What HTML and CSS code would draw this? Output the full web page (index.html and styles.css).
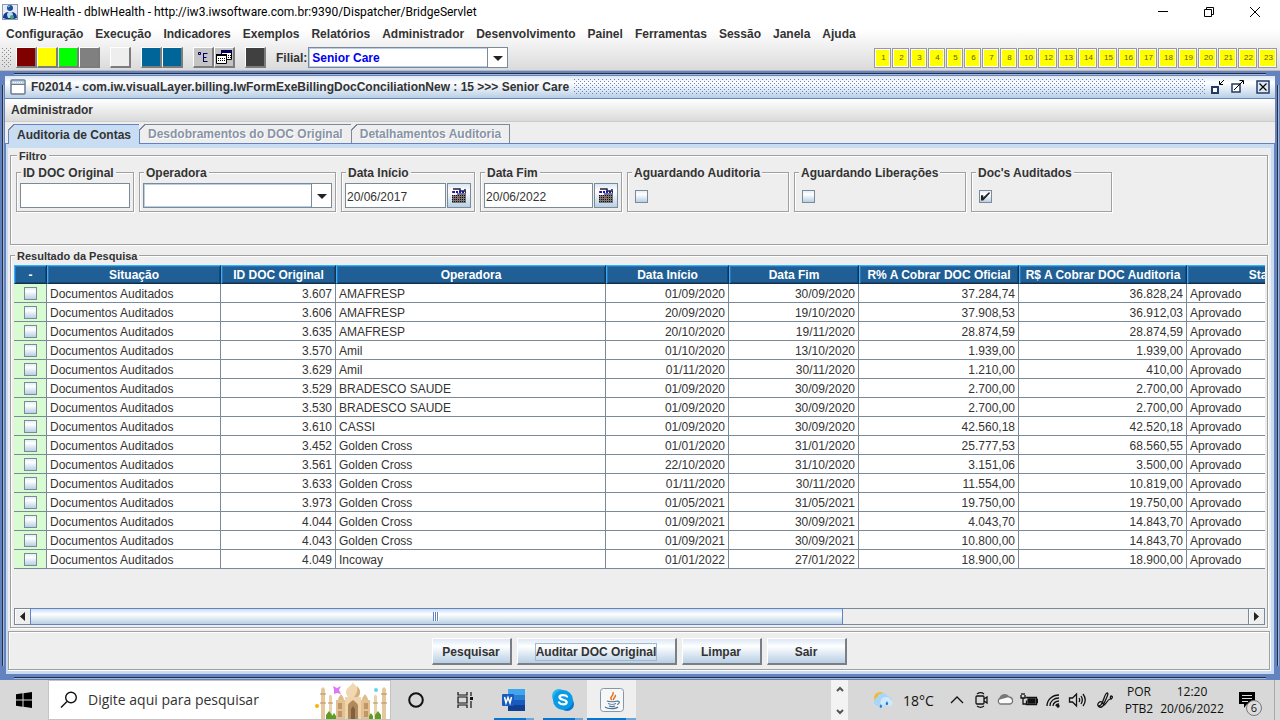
FILE: index.html
```html
<!DOCTYPE html>
<html lang="pt-BR">
<head>
	<meta charset="utf-8">
	<meta name="viewport" content="width=device-width, initial-scale=1">
	<title>IW-Health</title>
	<link rel="stylesheet" href="styles.css">
</head>
<body>
	<header class="titlebar">
		<svg class="app-icon" width="16" height="16" viewBox="0 0 16 16"><rect x=".5" y=".5" width="15" height="15" fill="#e8edf5" stroke="#8a9bb5"/><circle cx="8" cy="4" r="3" fill="#1d4f9c"/><path d="M1 14c0-4 2-5 4-6l3 1 3-1c2 1 4 2 4 6l-3 1H4z" fill="#123f8c"/><path d="M5 11a3 3 0 0 1 6 0v3H6z" fill="#b8d8f8"/><circle cx="10" cy="13" r="2" fill="#4aa36a"/><path d="M6 3l2-1" stroke="#9cc4f5"/></svg>
		<span class="title-text">IW-Health - dbIwHealth - http://iw3.iwsoftware.com.br:9390/Dispatcher/BridgeServlet</span>
		<div class="win-buttons">
			<button aria-label="Minimizar"><svg width="12" height="12" viewBox="0 0 12 12"><path d="M1 5.500h10" stroke="#000"/></svg></button>
			<button aria-label="Restaurar"><svg width="12" height="12" viewBox="0 0 12 12" fill="none" stroke="#000"><path d="M1.500 3.500h7v7h-7zM3.500 3.500v-2h7v7h-2"/></svg></button>
			<button aria-label="Fechar"><svg width="12" height="12" viewBox="0 0 12 12"><path d="M1 1l10 10M11 1L1 11" stroke="#000"/></svg></button>
		</div>
	</header>

	<div class="app-bars">
		<nav class="menubar">
			<a href="#">Configuração</a>
			<a href="#">Execução</a>
			<a href="#">Indicadores</a>
			<a href="#">Exemplos</a>
			<a href="#">Relatórios</a>
			<a href="#">Administrador</a>
			<a href="#">Desenvolvimento</a>
			<a href="#">Painel</a>
			<a href="#">Ferramentas</a>
			<a href="#">Sessão</a>
			<a href="#">Janela</a>
			<a href="#">Ajuda</a>
		</nav>
		<div class="toolbar">
			<span class="grip"></span>
			<div class="tool-group">
				<button class="tool maroon" aria-label="Vermelho"></button>
				<button class="tool yellow" aria-label="Amarelo"></button>
				<button class="tool green" aria-label="Verde"></button>
				<button class="tool gray" aria-label="Cinza"></button>
			</div>
			<div class="tool-group">
				<button class="tool" aria-label="Limpar cor"></button>
			</div>
			<div class="tool-group">
				<button class="tool blue" aria-label="Azul 1"></button>
				<button class="tool blue" aria-label="Azul 2"></button>
			</div>
			<div class="tool-group">
				<button class="tool silver" aria-label="Árvore"><svg width="16" height="16" viewBox="0 0 16 16" fill="none" stroke="#000060"><path d="M3.500 3.500h2v2h-2zM8.500 4v9M8.500 4.500h4M8.500 8.500h3M8.500 12.500h4"/></svg></button>
				<button class="tool silver" aria-label="Janelas"><svg width="18" height="18" viewBox="0 0 18 18"><path d="M6.500 2.500h10v9h-10z" fill="#fff" stroke="#000"/><path d="M6 2h11v3H6z" fill="#000060"/><path d="M1.500 6.500h10v9h-10z" fill="#fff" stroke="#000"/><path d="M1 6h11v2H1z" fill="#000"/><path d="M3 10.500h8M3 12.500h8M13 7.500h3M13 9.500h3" stroke="#000" stroke-dasharray="1 1"/></svg></button>
			</div>
			<div class="tool-group">
				<button class="tool dark" aria-label="Escuro"></button>
			</div>
			<label class="filial-label" for="filial">Filial:</label>
			<span class="combo filial">
				<select id="filial"><option>Senior Care</option></select>
			</span>
			<div class="slots">
				<button>1</button><button>2</button><button>3</button><button>4</button><button>5</button><button>6</button><button>7</button><button>8</button><button class="wide">10</button><button class="wide">12</button><button class="wide">13</button><button class="wide">14</button><button class="wide">15</button><button class="wide">16</button><button class="wide">17</button><button class="wide">18</button><button class="wide">19</button><button class="wide">20</button><button class="wide">21</button><button class="wide">22</button><button class="wide">23</button>
			</div>
		</div>
	</div>

	<main class="frame">
		<div class="frame-title">
			<svg width="16" height="16" viewBox="0 0 16 16"><rect x="1" y="1" width="14" height="14" rx="1" fill="#fff" stroke="#6b7b8d" stroke-width="1.500"/><path d="M2 2h12v3H2z" fill="#b8cfe5"/><path d="M3 3.500h10" stroke="#fff" stroke-dasharray="1 1"/><path d="M1 5.500h14" stroke="#6b7b8d"/></svg>
			<h1>F02014 - com.iw.visualLayer.billing.IwFormExeBillingDocConciliationNew : 15 &gt;&gt;&gt; Senior Care</h1>
			<span class="bumps"></span>
			<div class="frame-buttons">
				<button aria-label="Minimizar janela"><svg width="16" height="16" viewBox="0 0 16 16" fill="none"><path d="M2 8h6v6H2z" fill="#fff" stroke="#223a66" stroke-width="2"/><path d="M14 1l-4 4M9.500 2v3.500H13" stroke="#000"/></svg></button>
				<button aria-label="Maximizar janela"><svg width="16" height="16" viewBox="0 0 16 16" fill="none"><path d="M2 5h8v8H2z" fill="#fff" stroke="#223a66" stroke-width="1.500"/><path d="M4 11l9-9M9.500 1.500h4V5" stroke="#000"/></svg></button>
				<button class="close" aria-label="Fechar janela"><svg width="14" height="14" viewBox="0 0 14 14" fill="none"><path d="M1 1h12v12H1z" fill="#dce8f5" stroke="#223a66" stroke-width="1.500"/><path d="M3.500 3.500l7 7M10.500 3.500l-7 7" stroke="#000" stroke-width="1.200"/></svg></button>
			</div>
		</div>
		<nav class="frame-menu"><a href="#">Administrador</a></nav>
		<div class="tabs" role="tablist">
			<button class="tab active" role="tab" aria-selected="true">Auditoria de Contas</button>
			<button class="tab" role="tab" disabled>Desdobramentos do DOC Original</button>
			<button class="tab" role="tab" disabled>Detalhamentos Auditoria</button>
		</div>

		<div class="tab-outer">
		<div class="tab-pane">
			<fieldset class="panel filters">
				<legend>Filtro</legend>
				<div class="filter-row">
					<fieldset class="box">
						<legend><label for="id-doc">ID DOC Original</label></legend>
						<input class="field" id="id-doc" type="text">
					</fieldset>
					<fieldset class="box operadora-box">
						<legend><label for="operadora">Operadora</label></legend>
						<span class="combo">
							<select id="operadora"><option></option></select>
						</span>
					</fieldset>
					<fieldset class="box date-box">
						<legend><label for="data-inicio">Data Início</label></legend>
						<input class="field" id="data-inicio" type="text" value="20/06/2017">
						<button class="calendar" aria-label="Calendário início"><svg width="14" height="15" viewBox="0 0 14 15"><path d="M1 1h7v2h5V1" fill="none" stroke="#222" stroke-width="1.500"/><path d="M1 4h13" stroke="#1010e0" stroke-width="2" stroke-dasharray="2 1"/><path d="M5 5h9v10H0V7h5z" fill="#777"/><path d="M0 7.500h13M0 9.500h13M0 11.500h13M0 13.500h13" stroke="#111" stroke-dasharray="1 1"/><path d="M0 3h1v2H0zM6 9h2v1H6zM3 11h1v1H3z" fill="#e02020"/></svg></button>
					</fieldset>
					<fieldset class="box date-box fim-box">
						<legend><label for="data-fim">Data Fim</label></legend>
						<input class="field" id="data-fim" type="text" value="20/06/2022">
						<button class="calendar" aria-label="Calendário fim"><svg width="14" height="15" viewBox="0 0 14 15"><path d="M1 1h7v2h5V1" fill="none" stroke="#222" stroke-width="1.500"/><path d="M1 4h13" stroke="#1010e0" stroke-width="2" stroke-dasharray="2 1"/><path d="M5 5h9v10H0V7h5z" fill="#777"/><path d="M0 7.500h13M0 9.500h13M0 11.500h13M0 13.500h13" stroke="#111" stroke-dasharray="1 1"/><path d="M0 3h1v2H0zM6 9h2v1H6zM3 11h1v1H3z" fill="#e02020"/></svg></button>
					</fieldset>
					<fieldset class="box check-box auditoria-box">
						<legend><label for="ag-auditoria">Aguardando Auditoria</label></legend>
						<input class="check" id="ag-auditoria" type="checkbox">
					</fieldset>
					<fieldset class="box check-box liberacoes-box">
						<legend><label for="ag-liberacoes">Aguardando Liberações</label></legend>
						<input class="check" id="ag-liberacoes" type="checkbox">
					</fieldset>
					<fieldset class="box check-box docs-box">
						<legend><label for="docs">Doc's Auditados</label></legend>
						<input class="check" id="docs" type="checkbox" checked>
					</fieldset>
				</div>
			</fieldset>

			<fieldset class="panel results">
				<legend>Resultado da Pesquisa</legend>
				<div class="table-wrap">
					<table>
						<colgroup>
							<col class="c-check"><col class="c-sit"><col class="c-id"><col class="c-op"><col class="c-ini"><col class="c-fim"><col class="c-ofi"><col class="c-aud"><col class="c-status">
						</colgroup>
						<thead>
							<tr><th>-</th><th>Situação</th><th>ID DOC Original</th><th>Operadora</th><th>Data Início</th><th>Data Fim</th><th>R% A Cobrar DOC Oficial</th><th>R$ A Cobrar DOC Auditoria</th><th>Status</th></tr>
						</thead>
						<tbody>
							<tr><td><input class="check" type="checkbox" aria-label="3.607"></td><td>Documentos Auditados</td><td>3.607</td><td>AMAFRESP</td><td>01/09/2020</td><td>30/09/2020</td><td>37.284,74</td><td>36.828,24</td><td>Aprovado</td></tr>
							<tr><td><input class="check" type="checkbox" aria-label="3.606"></td><td>Documentos Auditados</td><td>3.606</td><td>AMAFRESP</td><td>20/09/2020</td><td>19/10/2020</td><td>37.908,53</td><td>36.912,03</td><td>Aprovado</td></tr>
							<tr><td><input class="check" type="checkbox" aria-label="3.635"></td><td>Documentos Auditados</td><td>3.635</td><td>AMAFRESP</td><td>20/10/2020</td><td>19/11/2020</td><td>28.874,59</td><td>28.874,59</td><td>Aprovado</td></tr>
							<tr><td><input class="check" type="checkbox" aria-label="3.570"></td><td>Documentos Auditados</td><td>3.570</td><td>Amil</td><td>01/10/2020</td><td>13/10/2020</td><td>1.939,00</td><td>1.939,00</td><td>Aprovado</td></tr>
							<tr><td><input class="check" type="checkbox" aria-label="3.629"></td><td>Documentos Auditados</td><td>3.629</td><td>Amil</td><td>01/11/2020</td><td>30/11/2020</td><td>1.210,00</td><td>410,00</td><td>Aprovado</td></tr>
							<tr><td><input class="check" type="checkbox" aria-label="3.529"></td><td>Documentos Auditados</td><td>3.529</td><td>BRADESCO SAUDE</td><td>01/09/2020</td><td>30/09/2020</td><td>2.700,00</td><td>2.700,00</td><td>Aprovado</td></tr>
							<tr><td><input class="check" type="checkbox" aria-label="3.530"></td><td>Documentos Auditados</td><td>3.530</td><td>BRADESCO SAUDE</td><td>01/09/2020</td><td>30/09/2020</td><td>2.700,00</td><td>2.700,00</td><td>Aprovado</td></tr>
							<tr><td><input class="check" type="checkbox" aria-label="3.610"></td><td>Documentos Auditados</td><td>3.610</td><td>CASSI</td><td>01/09/2020</td><td>30/09/2020</td><td>42.560,18</td><td>42.520,18</td><td>Aprovado</td></tr>
							<tr><td><input class="check" type="checkbox" aria-label="3.452"></td><td>Documentos Auditados</td><td>3.452</td><td>Golden Cross</td><td>01/01/2020</td><td>31/01/2020</td><td>25.777,53</td><td>68.560,55</td><td>Aprovado</td></tr>
							<tr><td><input class="check" type="checkbox" aria-label="3.561"></td><td>Documentos Auditados</td><td>3.561</td><td>Golden Cross</td><td>22/10/2020</td><td>31/10/2020</td><td>3.151,06</td><td>3.500,00</td><td>Aprovado</td></tr>
							<tr><td><input class="check" type="checkbox" aria-label="3.633"></td><td>Documentos Auditados</td><td>3.633</td><td>Golden Cross</td><td>01/11/2020</td><td>30/11/2020</td><td>11.554,00</td><td>10.819,00</td><td>Aprovado</td></tr>
							<tr><td><input class="check" type="checkbox" aria-label="3.973"></td><td>Documentos Auditados</td><td>3.973</td><td>Golden Cross</td><td>01/05/2021</td><td>31/05/2021</td><td>19.750,00</td><td>19.750,00</td><td>Aprovado</td></tr>
							<tr><td><input class="check" type="checkbox" aria-label="4.044"></td><td>Documentos Auditados</td><td>4.044</td><td>Golden Cross</td><td>01/09/2021</td><td>30/09/2021</td><td>4.043,70</td><td>14.843,70</td><td>Aprovado</td></tr>
							<tr><td><input class="check" type="checkbox" aria-label="4.043"></td><td>Documentos Auditados</td><td>4.043</td><td>Golden Cross</td><td>01/09/2021</td><td>30/09/2021</td><td>10.800,00</td><td>14.843,70</td><td>Aprovado</td></tr>
							<tr><td><input class="check" type="checkbox" aria-label="4.049"></td><td>Documentos Auditados</td><td>4.049</td><td>Incoway</td><td>01/01/2022</td><td>27/01/2022</td><td>18.900,00</td><td>18.900,00</td><td>Aprovado</td></tr>
						</tbody>
					</table>
				</div>
				<div class="scrollbar">
					<button aria-label="Rolar à esquerda"><svg width="5" height="9" viewBox="0 0 5 9"><path d="M5 0v9L0 4.500z" fill="#222"/></svg></button>
					<div class="track"><div class="thumb"></div></div>
					<button aria-label="Rolar à direita"><svg width="5" height="9" viewBox="0 0 5 9"><path d="M0 0v9l5-4.500z" fill="#222"/></svg></button>
				</div>
			</fieldset>

			<div class="actions">
				<button>Pesquisar</button>
				<button class="focused"><span>Auditar DOC Original</span></button>
				<button>Limpar</button>
				<button>Sair</button>
			</div>
		</div>
		</div>
	</main>

	<footer class="taskbar">
		<button class="start" aria-label="Iniciar"><svg width="16" height="16" viewBox="0 0 16 16"><path d="M0 2.200L6.500 1.300v6.200H0zM7.500 1.200L16 0v7.500H7.500zM0 8.500h6.500v6.200L0 13.800zM7.500 8.500H16V16l-8.500-1.200z"/></svg></button>
		<div class="search">
			<svg width="18" height="18" viewBox="0 0 18 18" fill="none" stroke="#111" stroke-width="1.400"><circle cx="11" cy="6.500" r="5.300"/><path d="M7 10.500L1 16.500"/></svg>
			<input type="text" aria-label="Pesquisar" placeholder="Digite aqui para pesquisar">
			<svg class="palace" width="76" height="38" viewBox="0 0 76 38">
				<circle cx="3" cy="25" r="2" fill="#ffb000"/><circle cx="62" cy="9" r="2" fill="#62d5ec"/>
				<path d="M19 5l4 2 4-2-2 4 2 4-4-1-3 1v-4z" fill="#dc7af5"/>
				<path d="M7 38V8l2-2 2 2v30zM68 38V8l2-2 2 2v30z" fill="#e4c79b"/>
				<path d="M15 38V15l1.500-1.500L18 15v23zM60 38V15l1.500-1.500L63 15v23z" fill="#e9d1a8"/>
				<path d="M6 13h6M6 22h6M67 13h6M67 22h6M14 22h5M59 22h5" stroke="#b58f62"/>
				<path d="M39 1c1 4 7 5 7 10 0 2-1 4-2 5H34c-1-1-2-3-2-5 0-5 6-6 7-10z" fill="#f0d9b2"/>
				<path d="M43 5c5 5 3 9 1 11h-4c3-4 4-7 3-11z" fill="#d5b07d"/>
				<path d="M24 19c0-3 2-4 3-6 1 2 3 3 3 6zM48 19c0-3 2-4 3-6 1 2 3 3 3 6z" fill="#dfbd8b"/>
				<path d="M22 19h34v19H22z" fill="#e2c091"/><path d="M31 16h16v22H31z" fill="#f0d5ac"/>
				<path d="M34 38V25c0-3 3-4 5-6 2 2 5 3 5 6v13z" fill="#b18a5c"/><path d="M37 38V28l2-3 2 3v10z" fill="#806040"/>
				<path d="M24 22h4v6h-4zM24 30h4v6h-4zM50 22h4v6h-4zM50 30h4v6h-4z" fill="#bd9768"/>
				<path d="M12 38v-4l3-4 3 4v4zM18 38v-3l2-3 2 3v3zM61 38v-4l3-4 3 4v4zM55 38v-3l2-3 2 3v3z" fill="#5e9c25"/>
			</svg>
		</div>
		<button class="task" aria-label="Cortana"><svg width="18" height="18" viewBox="0 0 18 18"><circle cx="9" cy="9" r="6.800" fill="none" stroke="#111" stroke-width="2"/></svg></button>
		<button class="task" aria-label="Visão de tarefas"><svg width="18" height="18" viewBox="0 0 18 18" fill="none" stroke="#111" stroke-width="1.200"><path d="M2 1v3h9V1M2 17v-3h9v3M2 6h9v6H2zM15 1v4M15 10v7"/><path d="M14 6h3v3h-3z" fill="#111" stroke="none"/></svg></button>
		<button class="task running" aria-label="Word"><svg width="24" height="24" viewBox="0 0 24 24"><path d="M6 1h17v6H6z" fill="#41a5ee"/><path d="M6 7h17v5H6z" fill="#2b7cd3"/><path d="M6 12h17v5H6z" fill="#185abd"/><path d="M6 17h17v6H6z" fill="#103f91"/><rect y="6" width="12" height="12" rx="1" fill="#185abd"/><path d="M2.500 9l1.500 6 2-5.500L8 15l1.500-6" fill="none" stroke="#fff" stroke-width="1.500"/></svg></button>
		<button class="task running" aria-label="Skype"><svg width="24" height="24" viewBox="0 0 24 24"><circle cx="8" cy="8" r="7" fill="#28b5ee"/><circle cx="16" cy="16" r="7" fill="#0078d4"/><circle cx="12" cy="12" r="10" fill="#0a9be6"/><path d="M16 8.500c-1-1.500-7-2.500-7.500.5-.3 3.500 7.500 2 7.200 5.300-.3 2.700-6.200 2.700-7.700.2" fill="none" stroke="#fff" stroke-width="2.200" stroke-linecap="round"/></svg></button>
		<button class="task running current" aria-label="Java"><svg width="24" height="24" viewBox="0 0 24 24" fill="none"><rect x=".5" y=".5" width="23" height="23" rx="3" fill="#f7f7f7" stroke="#8598aa"/><path d="M12 12c-4-3 3-4 1-8M14 12c-2-2 3-3 1-5" stroke="#e76f1e" stroke-width="1.500"/><path d="M7 13c2 1 8 1 10 0M8 15.500c2 1 6 1 8 0M9 18c2 .7 4 .7 6 0M17 13c4 0 2 3 0 3.500M5 19c3 2.500 11 2 13 0" stroke="#4a7597" stroke-width="1.200"/></svg></button>
		<div class="task-scroll">
			<button aria-label="Acima"><svg width="8" height="6" viewBox="0 0 8 6"><path d="M1 5l3-3 3 3" fill="none" stroke="#555" stroke-width="2"/></svg></button>
			<button aria-label="Abaixo"><svg width="8" height="6" viewBox="0 0 8 6"><path d="M1 1l3 3 3-3" fill="none" stroke="#555" stroke-width="2"/></svg></button>
		</div>
		<div class="weather">
			<svg width="22" height="18" viewBox="0 0 22 18"><circle cx="8" cy="7" r="6" fill="#f6b72f"/><path d="M5 15a4.500 4.500 0 0 1 0-8.500 6 6 0 0 1 11-1 5 5 0 0 1 1 9.500z" fill="#a9d6f7"/><path d="M9 14a5 5 0 0 1 10-5c3 2 2 6-2 6z" fill="#cfe9fc"/><path d="M9 13l1 2.500a1.200 1.200 0 0 1-2.400 0zM15 10l1.300 3a1.500 1.500 0 0 1-2.800 0z" fill="#1976d2"/></svg>
			<span>18°C</span>
		</div>
		<div class="tray">
			<svg viewBox="0 0 18 18"><path d="M3 12l6-6 6 6"/></svg>
			<svg viewBox="0 0 18 18"><rect x="4" y="5" width="8" height="8" rx="1"/><path d="M12 8l3-2v6l-3-2M5 3c2-1.500 5-1.500 7 0M5 15c2 1.500 5 1.500 7 0"/></svg>
			<svg viewBox="0 0 18 18"><path d="M4 13a3.500 3.500 0 0 1 0-6 5 5 0 0 1 9-1c4 0 5 6 1 7z" fill="#fafafa" stroke="#777"/><path d="M2 9c1-2 2-2 3-3 2-3 6-3 8 0z" fill="#777" stroke="none"/></svg>
			<svg viewBox="0 0 18 18"><path d="M5.500 6.500h11v7h-10v-4M16 8.500h1.500v3H16"/><path d="M8 8h7v4H8z" fill="#111"/><path d="M1 4v3h4V4M2 4V2M4 4V2M3 7v6h3"/></svg>
			<svg viewBox="0 0 18 18" stroke-width="1.100"><path d="M3 15C3 9 8 4 15 4M6 15c0-5 4-8 9-8M9 15c0-3 3-5 6-5M12 15c0-1 1-2 3-2"/><circle cx="14" cy="15" r="1" fill="#111"/></svg>
			<svg viewBox="0 0 18 18"><path d="M1.500 7h3l4-4v12l-4-4h-3zM11 7c1 1.500 1 2.500 0 4M13 5c2 3 2 5 0 8M15 3c3 4 3 8 0 12"/></svg>
			<svg class="pen" viewBox="0 0 18 18"><path d="M2 15c3 3 8-1 4-4-3-2-6 4-3 4 4 0 5-12 8-13 3 0-3 9-4 13 3-1 4-6 7-7 3 0 3-3 1-3-1 1-1 3 1 3"/></svg>
		</div>
		<div class="lang">POR<br>PTB2</div>
		<div class="clock">12:20<br>20/06/2022</div>
		<button class="notices" aria-label="Notificações"><svg width="18" height="18" viewBox="0 0 18 18"><path d="M1 1h16v12H9l-3 4v-4H1z" fill="#000"/><path d="M4 4.500h10M4 7.500h10M4 10.500h6" stroke="#ddd"/></svg><span class="badge">6</span></button>
	</footer>
</body>
</html>
```

FILE: styles.css
```css
* {
	box-sizing: border-box;
}

body {
	margin: 0;
	height: 100vh;
	display: flex;
	flex-direction: column;
	overflow: hidden;
	background: #eee;
	color: #333;
	font: bold 12px/14px "Liberation Sans", Arial, sans-serif;
}

button {
	margin: 0;
	padding: 0;
	border: 0;
	background: none;
	font: inherit;
	color: inherit;
}

a {
	color: inherit;
	text-decoration: none;
}

svg {
	display: block;
	flex: none;
}

fieldset {
	min-width: 0;
	margin: 0;
}

.titlebar {
	display: flex;
	align-items: center;
	height: 23px;
	padding-left: 2px;
	background: #fff;
	color: #000;
	font: 12px/16px Roboto, "Open Sans", sans-serif;
}

.title-text {
	margin-left: 5px;
}

.win-buttons {
	display: flex;
	margin-left: auto;
}

.win-buttons button {
	display: flex;
	align-items: center;
	justify-content: center;
	width: 46px;
	height: 20px;
}

.win-buttons button:last-child {
	margin-right: 2px;
}

/* menu and toolbar share one gradient */
.app-bars {
	height: 48px;
	border-bottom: 1px solid #bbb;
	background: linear-gradient(#fff, #fff 15%, #dadada);
}

.menubar {
	display: flex;
	gap: 12px;
	height: 24px;
	padding: 4px 6px;
}

.toolbar {
	display: flex;
	align-items: center;
	height: 21px;
	padding-left: 2px;
}

.grip,
.bumps {
	background-position: 0 0, 2px 2px;
	background-size: 4px 4px;
}

.grip {
	width: 10px;
	height: 20px;
	margin-right: 4px;
	background-image: conic-gradient(at 1px 1px, transparent 75%, #888 0), conic-gradient(at 1px 1px, transparent 75%, #888 0);
}

.tool-group {
	display: flex;
	margin-right: 10px;
}

.tool {
	display: flex;
	align-items: center;
	justify-content: center;
	width: 21px;
	height: 21px;
	border: solid;
	border-width: 1px 2px 2px 1px;
	border-color: #fff #7c7c7c #7c7c7c #fff;
	background: #eee;
	overflow: hidden;
}

.maroon { background: #800000; }
.yellow { background: #ff0; }
.green { background: #0f0; }
.gray { background: #808080; }
.blue { background: #006699; }
.silver { background: #c4c4c4; }
.dark { background: #404040; }

.filial-label {
	margin-right: 1px;
}

.combo {
	position: relative;
	display: block;
	height: 25px;
}

.combo select {
	appearance: none;
	width: 100%;
	height: 100%;
	padding: 0 22px 0 3px;
	border: 1px solid #7a8a99;
	border-radius: 0;
	background: #fff;
	box-shadow: inset 0 0 0 1px #b8cfe5;
	font: inherit;
	color: #333;
}

.combo::before {
	content: "";
	position: absolute;
	top: 1px;
	right: 1px;
	bottom: 1px;
	width: 19px;
	border-left: 1px solid #7a8a99;
	background: #fff;
	pointer-events: none;
}

.combo::after {
	content: "";
	position: absolute;
	top: calc(50% - 2px);
	right: 5px;
	border: 5px solid transparent;
	border-top-color: #222;
	border-bottom: 0;
	pointer-events: none;
}

.filial {
	width: 200px;
	height: 21px;
}

.filial select {
	color: #0000ee;
}

.slots {
	display: flex;
	gap: 1px;
	margin-left: auto;
	padding-right: 3px;
}

.slots button {
	width: 17px;
	height: 20px;
	padding-left: 2px;
	border: 1px solid #999;
	background: #ff0;
	box-shadow: inset 0 0 0 1px #fff;
	color: #665c00;
	font: 8px/16px "Liberation Sans", Arial, sans-serif;
}

.slots .wide {
	width: 19px;
}

/* Metal look internal frame, lines stop 14px before the corners */
.frame {
	flex: 1;
	min-height: 0;
	display: flex;
	flex-direction: column;
	padding: 5px;
	background:
		linear-gradient(#222f45 50%, #a3b8cc 50%) center 2px / calc(100% - 28px) 2px no-repeat,
		linear-gradient(#222f45 50%, #a3b8cc 50%) center bottom 1px / calc(100% - 28px) 2px no-repeat,
		linear-gradient(90deg, #222f45 50%, #a3b8cc 50%) 2px center / 2px calc(100% - 28px) no-repeat,
		linear-gradient(90deg, #222f45 50%, #a3b8cc 50%) right 1px center / 2px calc(100% - 28px) no-repeat,
		#6382bf;
}

.frame-title {
	display: flex;
	align-items: center;
	height: 23px;
	padding: 0 5px;
	border-bottom: 1px solid #6382bf;
	background: linear-gradient(#dbe7f4, #fff 30%, #b8cfe5);
}

.frame-title h1 {
	margin: 0 5px;
	font-size: 12px;
	white-space: nowrap;
}

.bumps {
	flex: 1;
	height: 16px;
	background-image: conic-gradient(at 1px 1px, transparent 75%, #6382bf 0), conic-gradient(at 1px 1px, transparent 75%, #6382bf 0);
}

.frame-buttons {
	display: flex;
	align-items: center;
	gap: 4px;
	margin-left: 4px;
}

.frame-buttons .close {
	margin-left: 6px;
}

.frame-menu {
	height: 23px;
	padding: 4px 6px;
	border-bottom: 1px solid #ccc;
	background: linear-gradient(#fff, #dadada);
}

.tabs {
	display: flex;
	align-items: flex-end;
	height: 21px;
	padding-left: 3px;
	background: #eee;
}

.tab {
	position: relative;
	height: 19px;
	padding: 0 8px 1px;
	border: 1px solid #7a8a99;
	border-width: 1px 1px 0 0;
	color: #8794a6;
	text-shadow: 1px 1px 0 #fff;
}

.tab.active {
	height: 20px;
	margin-bottom: -1px;
	padding: 0 8px;
	border-color: #6382bf;
	border-left-width: 1px;
	background: #c8ddf2;
	color: #333;
	text-shadow: none;
}

/* cut corner */
.tab::before {
	content: "";
	position: absolute;
	top: -1px;
	left: -1px;
	width: 7px;
	height: 7px;
	background: linear-gradient(135deg, #eee 0 42%, #7a8a99 42% 54%, transparent 54%);
}

.tab-outer {
	flex: 1;
	min-height: 0;
	display: flex;
	border: 1px solid #6382bf;
}

.tab-pane {
	flex: 1;
	min-width: 0;
	display: flex;
	flex-direction: column;
	border: solid #c8ddf2;
	border-width: 4px 3px 3px 2px;
	background: #eee;
}

.panel,
.box,
.actions {
	border: 1px solid #a0a0a0;
	box-shadow: inset 1px 1px 0 #fff, 1px 1px 0 #fff;
}

.panel {
	margin: 0 3px 0 2px;
	padding: 3px 2px 2px 3px;
}

legend {
	margin-left: 4px;
	padding: 2px 2px 0;
	background: #eee;
	line-height: 12px;
}

.panel > legend {
	margin-left: 1px;
	font-size: 11px;
}

.filters {
	padding: 3px 5px 32px;
}

.filter-row {
	display: flex;
	gap: 5px;
}

.box {
	display: flex;
	gap: 1px;
	width: 118px;
	padding: 4px 3px 3px;
}

.box > legend {
	margin-left: 1px;
}

.operadora-box { width: 197px; }
.date-box { width: 134px; }
.fim-box { width: 142px; }
.auditoria-box { width: 162px; }
.liberacoes-box { width: 172px; }
.docs-box { width: 141px; }

.operadora-box .combo {
	width: 100%;
}

.field {
	flex: 1;
	min-width: 0;
	width: 100%;
	height: 25px;
	padding: 2px 1px 0;
	border: 1px solid #7a8a99;
	border-radius: 0;
	background: #fff;
	color: #333;
	font: 12px/14px "Liberation Sans", Arial, sans-serif;
}

.calendar {
	display: flex;
	align-items: center;
	justify-content: center;
	width: 24px;
	height: 25px;
	border: 1px solid #7a8a99;
	background: linear-gradient(#dbe7f4, #fff 30%, #b8cfe5);
}

.check {
	appearance: none;
	display: block;
	width: 13px;
	height: 13px;
	margin: 0;
	border: 1px solid #7a8a99;
	background: linear-gradient(#e4eef8, #fff 30%, #b8cfe5);
}

.check:checked::before {
	content: "";
	display: block;
	width: 9px;
	height: 9px;
	margin: 1px;
	background: #222;
	clip-path: polygon(0 35%, 25% 35%, 25% 60%, 90% 0, 100% 15%, 25% 95%, 0 95%);
}

.check-box .check {
	margin: 7px 4px 5px;
}

.results {
	flex: 1;
	min-height: 0;
	display: flex;
	flex-direction: column;
	margin-top: 3px;
}

.table-wrap {
	flex: 1;
	min-height: 0;
	overflow: hidden;
}

table {
	width: 1333px;
	table-layout: fixed;
	border-spacing: 0;
}

.c-check { width: 33px; }
.c-sit { width: 174px; }
.c-id { width: 115px; }
.c-op { width: 270px; }
.c-ini { width: 123px; }
.c-fim { width: 130px; }
.c-ofi { width: 160px; }
.c-aud { width: 168px; }
.c-status { width: 160px; }

th {
	height: 19px;
	padding: 2px 0 0;
	border: 1px solid;
	border-color: #33b0ff #12304f #12304f #33b0ff;
	background: #205f96;
	box-shadow: inset 1px 1px 0 #2378bd, inset -1px -1px 0 #184870;
	color: #fff;
	line-height: 15px;
}

td {
	height: 19px;
	padding: 2px 3px 0;
	border: solid #7a8a99;
	border-width: 0 1px 1px 0;
	background: #fff;
	font-weight: normal;
	line-height: 16px;
}

td:first-child {
	padding: 0 10px;
	background: #d9fbd2;
}

td:nth-child(3),
td:nth-child(n+5):nth-child(-n+8) {
	text-align: right;
}

.scrollbar {
	display: flex;
	height: 17px;
	border: 1px solid #7a8a99;
}

.scrollbar button {
	display: flex;
	align-items: center;
	justify-content: center;
	width: 15px;
	box-shadow: inset 1px 1px 0 #fff;
}

.track {
	flex: 1;
	border: solid #7a8a99;
	border-width: 0 1px;
}

.thumb {
	width: 66.6%;
	height: 15px;
	background:
		repeating-linear-gradient(90deg, #6382bf 0 1px, #fff 1px 2px) center / 6px 9px no-repeat,
		linear-gradient(#c8ddf2, #fff 35%, #b8cfe5);
	box-shadow: 0 0 0 1px #6382bf;
}

.actions {
	display: flex;
	justify-content: center;
	gap: 5px;
	height: 39px;
	margin: 3px 1px 1px 0;
	padding: 6px 0;
}

.actions button {
	width: 80px;
	height: 27px;
	padding-top: 1px;
	border: solid;
	border-width: 1px 2px 2px 1px;
	border-color: #fff #7a7f85 #7a7f85 #fff;
	background: linear-gradient(#dbe7f4, #fff 30%, #b8cfe5);
}

.actions .focused {
	width: 160px;
}

.focused span {
	display: inline-block;
	border: 1px solid #a3b8cc;
	line-height: 16px;
}

.taskbar {
	display: flex;
	height: 40px;
	background: #d8d8d8;
	color: #111;
	font: 12px/17px "Open Sans", "Noto Sans", sans-serif;
}

.start,
.task {
	position: relative;
	display: flex;
	align-items: center;
	justify-content: center;
	width: 49px;
}

.start {
	width: 48px;
}

.search {
	display: flex;
	align-items: center;
	width: 343px;
	padding-left: 11px;
	border: 1px solid #c4c4c4;
	background: #fff;
}

.search input {
	flex: 1;
	min-width: 0;
	padding: 0 0 0 10px;
	border: 0;
	background: none;
	font: 14px/20px "Open Sans", "Noto Sans", sans-serif;
}

.search input::placeholder {
	color: #333;
	opacity: 1;
}

.running::after {
	content: "";
	position: absolute;
	right: 4px;
	bottom: 0;
	left: 5px;
	height: 2px;
	background: linear-gradient(90deg, #0078d7 80%, #65a9df 80%);
}

.current {
	background: #efefef;
}

.current::after {
	right: 0;
	left: 0;
}

.task-scroll {
	display: flex;
	flex-direction: column;
	justify-content: space-between;
	align-items: center;
	width: 17px;
	margin-left: auto;
	padding: 6px 0 5px;
	background: #f3f3f3;
}

.weather {
	display: flex;
	align-items: center;
	gap: 9px;
	width: 97px;
	padding-left: 24px;
	font-size: 14px;
}

.tray {
	display: flex;
	align-items: center;
	gap: 6px;
	width: 176px;
	padding-left: 3px;
}

.tray svg {
	width: 18px;
	height: 18px;
	fill: none;
	stroke: #111;
	stroke-width: 1.3;
}

.tray .pen {
	margin-left: 4px;
}

.lang,
.clock {
	width: 36px;
	padding-top: 3px;
	text-align: center;
}

.clock {
	width: 70px;
}

.notices {
	position: relative;
	display: flex;
	align-items: center;
	justify-content: center;
	width: 48px;
	margin-right: 5px;
	padding-right: 8px;
	border-right: 1px solid #aaa;
}

.badge {
	position: absolute;
	right: 12px;
	bottom: 4px;
	width: 16px;
	height: 16px;
	border: 1px solid #777;
	border-radius: 50%;
	background: #ddd;
	font-size: 11px;
	line-height: 14px;
}
```
